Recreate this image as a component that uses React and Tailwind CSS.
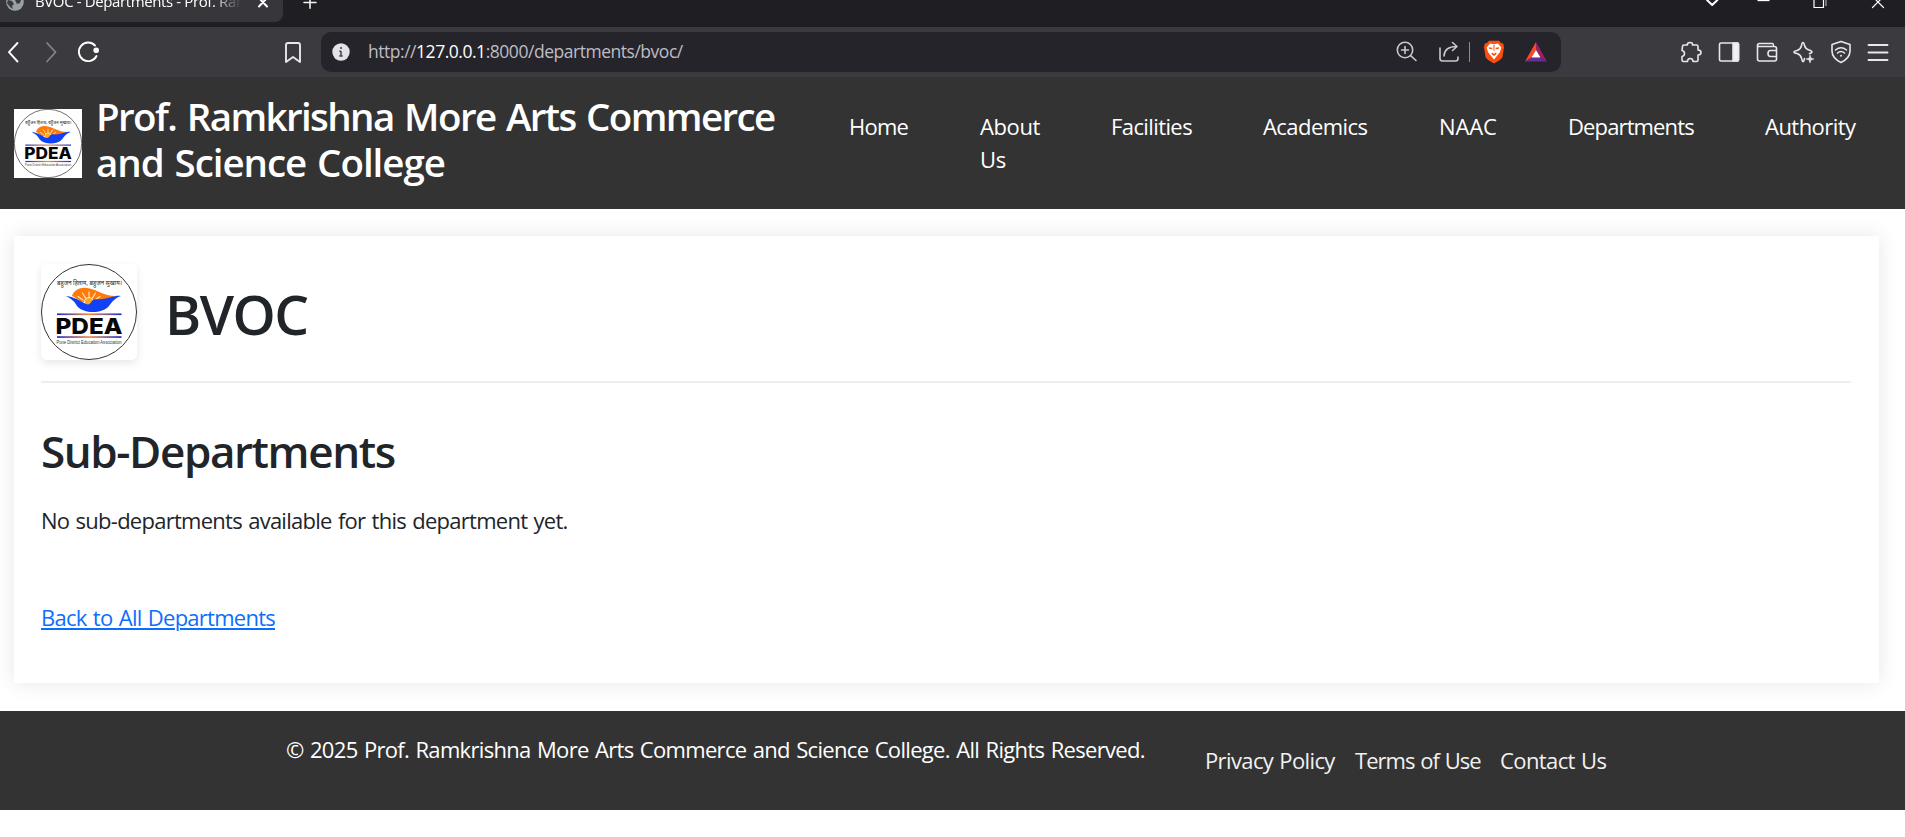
function Icon({ w = 24, h = 24, className = "", children }) {
  return (
    <svg width={w} height={h} viewBox={`0 0 ${w} ${h}`} fill="none" stroke="#e8e8ec" strokeWidth="1.6" strokeLinecap="round" strokeLinejoin="round" className={`shrink-0 ${className}`}>
      {children}
    </svg>
  );
}

function CollegeLogo({ className, id }) {
  return (
    <svg viewBox="0 0 96 96" preserveAspectRatio="none" className={className}>
      <defs>
        <linearGradient id={id}>
          <stop offset="0" stopColor="#1c2fd6" />
          <stop offset="0.5" stopColor="#f58a3c" />
          <stop offset="1" stopColor="#1c2fd6" />
        </linearGradient>
      </defs>
      <rect width="96" height="96" fill="#fff" />
      <circle cx="48" cy="48" r="47.5" fill="#fff" stroke="#333" strokeWidth="1" />
      <text x="16" y="21" fontSize="6.8" textLength="65" lengthAdjust="spacingAndGlyphs" fill="#222">बहुजन हिताय, बहुजन सुखाय।</text>
      <path d="M31 32C33 26 39 23 46 24C56 25 62 32 75 32L66 35C64 38 61 36 58 37L40 38C37 36 34 33 31 32Z" fill="#ff7a0c" />
      <g stroke="#ffe9b0" strokeWidth="1.2" strokeLinecap="round">
        <path d="M48 34V28M44.5 34L41.5 29M51.5 34L54.5 29M42 36L37 32.5M54 36L59 32.5" />
      </g>
      <circle cx="48" cy="38" r="4.5" fill="#ffa81c" stroke="#fff" strokeWidth="0.8" />
      <path d="M25 32C34 33 39 37 45 40C48 41 49 40 51 37C53 34 57 36 62 35C70 34 74 31 80 32C74 34 71 38 68 42C61 50 43 50 36 42C34 38 31 35 25 32Z" fill="#1240f5" />
      <rect x="16" y="49.4" width="64.5" height="1.7" fill={`url(#${id})`} />
      <text x="14.5" y="69.8" fontSize="22" fontWeight="800" textLength="67" lengthAdjust="spacingAndGlyphs" fill="#080808" fontFamily="Inter, sans-serif">PDEA</text>
      <rect x="16" y="72.2" width="64.5" height="1.7" fill={`url(#${id})`} />
      <text x="15.5" y="79.8" fontSize="5" textLength="65" lengthAdjust="spacingAndGlyphs" fill="#333" fontFamily="Liberation Sans, sans-serif">Pune District Education Association</text>
    </svg>
  );
}

function TabStrip() {
  return (
    <div className="flex h-[27px] items-start bg-[#1f1e23]">
      <div className="flex h-[22px] w-[283px] items-start overflow-hidden rounded-br-[8px] bg-[#37363b]">
        <svg width="18" height="12" viewBox="0 0 18 12" className="ml-[6px] shrink-0">
          <circle cx="9" cy="2" r="8.8" fill="#9aa0a6" />
          <path d="M2 0L6 1L8 4L6 6L7 9L4 7L1 3ZM9 0H15L14 3L11 4Z" fill="#3b3b40" />
        </svg>
        <div className="-mt-[10px] ml-[11px] w-[208px] overflow-hidden whitespace-nowrap text-[15px] leading-[22px] tracking-[-0.38px] text-white [mask-image:linear-gradient(to_right,black_85%,transparent_99%)]">
          BVOC - Departments - Prof. Ramkrishna
        </div>
        <Icon w={14} h={9} className="ml-[13px]"><path d="M3 -2L11 6.5M11 -2L3 6.5" stroke="#fff" strokeWidth="2" /></Icon>
      </div>
      <Icon w={16} h={10} className="ml-[19px]"><path d="M2 2.5H14M8 -4V8.2" stroke="#f1f1f1" /></Icon>
      <Icon w={16} h={9} className="ml-[1386px]"><path d="M3 0L8.200 5L13.400 0" stroke="#fff" strokeWidth="2" /></Icon>
      <Icon w={16} h={9} className="ml-[36px]"><path d="M1.500 .5H13.500" stroke="#fff" strokeWidth="1.300" strokeLinecap="butt" /></Icon>
      <Icon w={16} h={10} className="ml-[40px]"><path d="M2 -3V7.500H11.500V-3" stroke="#fff" strokeWidth="1.200" /><path d="M14 -2V5.500" stroke="#aaa" strokeWidth="1.200" /></Icon>
      <Icon w={16} h={10} className="ml-[42px]"><path d="M2.500 7.500L12 -2M13.500 7.500L4 -2" stroke="#fff" strokeWidth="1.200" /></Icon>
    </div>
  );
}

function Toolbar() {
  return (
    <div className="flex h-[50px] items-center bg-[#3b3a3f]">
      <Icon className="ml-[2px]"><path d="M15.500 3L7 12.200L15.500 21.500" stroke="#fff" strokeWidth="1.900" /></Icon>
      <Icon className="ml-[13px]"><path d="M8 3L16.500 12.200L8 21.500" stroke="#85848a" strokeWidth="1.700" /></Icon>
      <Icon className="ml-[13px]">
        <path d="M19 5.500A9.300 9.300 0 1 0 20.500 16" stroke="#fff" strokeWidth="1.900" />
        <circle cx="20.200" cy="10.300" r="2.800" fill="#fff" stroke="none" />
      </Icon>
      <Icon className="ml-[181px]"><path d="M5 5A2 2 0 0 1 7 3H17A2 2 0 0 1 19 5V22L12 17L5 22Z" strokeWidth="1.900" /></Icon>
      <div className="ml-[16px] flex h-[40px] w-[1240px] items-center rounded-[10px] bg-[#25242a]">
        <svg width="18" height="18" viewBox="0 0 18 18" className="ml-[11px] shrink-0">
          <circle cx="9" cy="9" r="8.700" fill="#e3e2e8" />
          <path d="M9 8V13M7.300 8.300H9M7.300 13H10.700" stroke="#444349" strokeWidth="1.500" />
          <circle cx="9" cy="5" r="1.100" fill="#444349" />
        </svg>
        <div className="mb-[1px] ml-[18px] w-[1011px] whitespace-nowrap text-[17.5px] tracking-[-0.47px] text-[#bebdc4]">
          http://<span className="text-white">127.0.0.1</span>:8000/departments/bvoc/
        </div>
        <Icon className="ml-[16px]">
          <g stroke="#c9c8cf"><circle cx="10" cy="10" r="7.700" /><path d="M15.600 15.600L21 20.500M6.500 10H13.500M10 6.500V13.500" /></g>
        </Icon>
        <Icon className="ml-[18px]">
          <g stroke="#c9c8cf"><path d="M3 8V18.500Q3 21 5.500 21H18.500Q21 21 21 18.500V17" /><path d="M7 16Q7.500 6.500 19.500 6.500M15.500 2.500L20 6.500L15.500 10.500" /></g>
        </Icon>
        <div className="ml-[8px] h-[20px] w-px bg-[#8c8b91]" />
        <svg width="22" height="24" viewBox="0 0 22 24" className="ml-[13px] shrink-0">
          <path d="M6 .8H16L18 3L20.200 3.500L21 7L19.500 17Q18.500 19.500 11 23.500Q3.500 19.500 2.500 17L1 7L1.800 3.500L4 3Z" fill="#fb4f0d" />
          <path d="M7 3.500L11 4.300L15 3.500L18.300 7.500L17 12L14.700 15L11 19.500L7.300 15L5 12L3.700 7.500Z" fill="#fff" />
          <path d="M5.700 7.200L9.200 7.800L9.500 9.300L6.500 9ZM16.300 7.200L12.800 7.800L12.500 9.300L15.500 9ZM9.300 12.500L11 14L12.700 12.500L13.800 14L11 16L8.200 14ZM10.400 5H11.600L11.400 11H10.600Z" fill="#fb4f0d" />
        </svg>
        <svg width="24" height="22" viewBox="0 0 24 22" className="ml-[19px] shrink-0">
          <path d="M12 1V9L7.500 16.500L1 20.500Z" fill="#ff4724" />
          <path d="M12 1L23 20.500L16.500 16.500L12 9Z" fill="#9e1f63" />
          <path d="M1 20.500L7.500 16.500H16.500L23 20.500Z" fill="#662d91" />
          <path d="M12 9L16.500 16.500H7.500Z" fill="#fff" />
        </svg>
      </div>
      <Icon className="ml-[118px]">
        <path d="M3.500 6.500Q3.500 5 5 5H8.500Q8 2.500 11 2.500Q14 2.500 13.500 5H17.500Q19 5 19 6.500V10Q22 10 22 12.500Q22 15 19 15V20Q19 21.500 17.500 21.500H14Q14 18.500 11.200 18.500Q8.500 18.500 8.500 21.500H4.500Q3 21.500 3 20V16.500Q5.500 16 5.500 13.500Q5.500 11 3 10.500Z" />
      </Icon>
      <Icon className="ml-[14px]"><rect x="2.500" y="3" width="19" height="18" rx="1.500" /><path d="M16 3H20.500Q21.500 3 21.500 4V20Q21.500 21 20.500 21H16Z" fill="#f1f0f5" /></Icon>
      <Icon className="ml-[14px]">
        <path d="M2.500 5.500Q2.500 3.500 4.500 3.500H17.500Q18.500 3.500 18.500 6.500M2.500 5V19Q2.500 21 4.500 21H19.500Q21.500 21 21.500 19V8.500Q21.500 6.500 19.500 6.500H4Q2.500 6.500 2.500 5M21.500 10.500H15.500Q13 10.500 13 13.500Q13 16.500 15.500 16.500H21.500" />
      </Icon>
      <Icon className="ml-[13px]">
        <path d="M11 2.500Q12 2.500 12.500 5.500Q13.500 9 17 10Q20 10.800 20 12Q20 13 17.500 13.500M11 2.500Q10 2.500 9.500 5.500Q8.500 9.500 5 10.500Q2 11.200 2 12Q2 13 5 13.500Q8.500 14.500 9.500 18Q10.200 21.500 11 21.500Q12 21.500 12.500 18.500" />
        <path d="M18 15L19 18L22 19L19 20L18 23L17 20L14 19L17 18Z" fill="#e8e8ec" strokeWidth=".5" />
      </Icon>
      <Icon className="ml-[13px]">
        <path d="M12 1.500L21 4.500V11Q21 18 12 22.500Q3 18 3 11V4.500Z" />
        <path d="M6.500 10Q12 5.500 17.500 10M8.500 13Q12 10 15.500 13" /><circle cx="12" cy="15.800" r="1" fill="#e8e8ec" stroke="none" />
      </Icon>
      <Icon className="ml-[13px]"><path d="M2.500 5H21.500M2.500 12.500H21.500M2.500 20H21.500" strokeWidth="1.900" /></Icon>
    </div>
  );
}

const NAV = [
  ["Home", "w-[60px] tracking-[-0.75px]"],
  ["About Us", "w-[60px] tracking-[-0.4px]"],
  ["Facilities", "w-[81px] tracking-[-0.6px]"],
  ["Academics", "w-[105px] tracking-[-0.55px]"],
  ["NAAC", "w-[58px] tracking-[-0.1px]"],
  ["Departments", "w-[126px] tracking-[-0.87px]"],
  ["Authority", "w-[91px] tracking-[-0.53px]"],
];

export default function App() {
  return (
    <div className="min-h-[837px] w-full overflow-hidden bg-white font-['Open_Sans','Noto_Sans',sans-serif] text-[22px] leading-[33px] text-[#212529]">
      <TabStrip />
      <Toolbar />
      <header className="flex h-[132px] items-start bg-[#333] pl-[14px] pt-[16px] text-white">
        <CollegeLogo id="stripe-small" className="mt-[16px] h-[69px] w-[68px]" />
        <h1 className="ml-[14px] w-[753px] text-[38.5px] font-semibold leading-[46px] tracking-[-1.6px] [word-spacing:2px]">
          Prof. Ramkrishna More Arts Commerce
          <br />
          <span className="tracking-[-1.05px]">and Science College</span>
        </h1>
        <nav className="mt-[17px] flex gap-[71px]">
          {NAV.map(([label, cls]) => (
            <a key={label} className={cls}>{label}</a>
          ))}
        </nav>
      </header>
      <main className="ml-[14px] mr-[26px] mt-[27px] h-[447px] bg-white pl-[27px] pr-[28px] pt-[28px] shadow-[0_0_20px_rgba(0,0,0,0.1)]">
        <div className="flex h-[119px] items-start border-b-2 border-[#eee]">
          <CollegeLogo id="stripe-large" className="size-[96px] rounded-[6px] shadow-[0_3px_8px_rgba(0,0,0,0.1)]" />
          <h2 className="ml-[28px] mt-[16px] text-[55px] font-semibold leading-[67px] tracking-[-1.5px]">BVOC</h2>
        </div>
        <h3 className="mt-[41px] text-[44px] font-semibold leading-[54px] tracking-[-1.4px]">Sub-Departments</h3>
        <p className="mt-[26px] tracking-[-0.74px] [word-spacing:1.3px]">No sub-departments available for this department yet.</p>
        <a className="mt-[64px] inline-block tracking-[-0.74px] text-[#0d6efd] underline decoration-2 underline-offset-[2px] [word-spacing:1.3px]">Back to All Departments</a>
      </main>
      <footer className="mt-[28px] flex h-[99px] items-start bg-[#333] pl-[286px] pt-[22px] text-white">
        <p className="w-[919px] whitespace-nowrap tracking-[-0.68px] [word-spacing:1.3px]">© 2025 Prof. Ramkrishna More Arts Commerce and Science College. All Rights Reserved.</p>
        <div className="mt-[11px] flex gap-[20px] whitespace-nowrap text-[#f1f1f1] [word-spacing:1px]">
          <a className="w-[130px] tracking-[-0.62px]">Privacy Policy</a>
          <a className="w-[125px] tracking-[-0.97px]">Terms of Use</a>
          <a className="tracking-[-0.6px]">Contact Us</a>
        </div>
      </footer>
    </div>
  );
}
